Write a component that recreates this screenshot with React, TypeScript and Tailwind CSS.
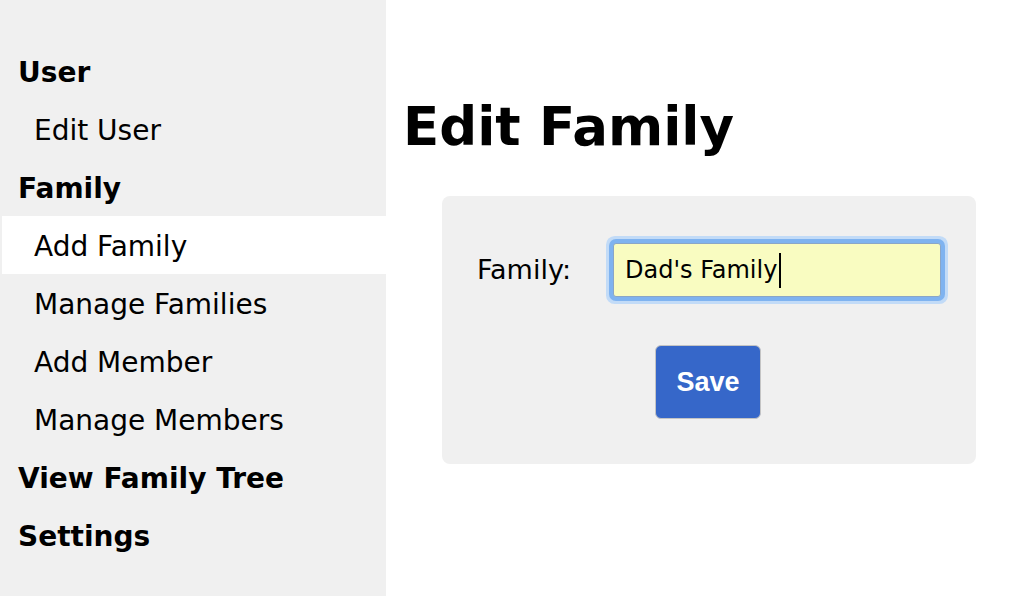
import React from "react";

const heading = "h-[58px] leading-[62px] pl-[16px] text-[28px] font-bold text-black";
const sub = "h-[58px] leading-[62px] pl-[32px] text-[28px] text-black";

export default function App() {
  return (
    <div
      className="flex w-[1032px] h-[596px] bg-white overflow-hidden"
      style={{ fontFamily: '"DejaVu Sans", Verdana, sans-serif' }}
    >
      <aside className="w-[386px] shrink-0 bg-[#f0f0f0] pt-[42px] pl-[2px]">
        <div className={heading}>User</div>
        <div className={sub}>Edit User</div>
        <div className={heading}>Family</div>
        <div className={sub + " bg-white"}>Add Family</div>
        <div className={sub}>Manage Families</div>
        <div className={sub}>Add Member</div>
        <div className={sub}>Manage Members</div>
        <div className={heading}>View Family Tree</div>
        <div className={heading}>Settings</div>
      </aside>
      <main className="flex-1 flex flex-col">
        <h1 className="mt-[100px] ml-[17px] text-[53px] leading-[54px] font-bold text-black">
          Edit Family
        </h1>
        <div className="mt-[42px] mx-[56px] h-[268px] rounded-[8px] bg-[#f0f0f0] px-[35px] pt-[47px] flex flex-col">
          <div className="flex items-center">
            <label className="w-[136px] text-[27px] text-black">Family:</label>
            <div className="flex-1 h-[54px] rounded-[3px] border border-[#8aa6c8] bg-[#f9fcc1] shadow-[0_0_0_4px_#7fb3f0,0_0_0_7px_#c2dbf7] flex items-center pl-[11px]">
              <span className="text-[24px] text-black whitespace-pre">Dad's Family</span>
              <span className="ml-[2px] w-[1.5px] h-[35px] bg-black" />
            </div>
          </div>
          <div className="mt-[48px] flex justify-center">
            <button
              className="w-[106px] h-[74px] mr-[2px] rounded-[6px] border border-[#c4c4c4] bg-[#3667c9] text-white text-[27px] font-bold"
              style={{ fontFamily: '"Liberation Sans", Arial, sans-serif' }}
            >
              Save
            </button>
          </div>
        </div>
      </main>
    </div>
  );
}
